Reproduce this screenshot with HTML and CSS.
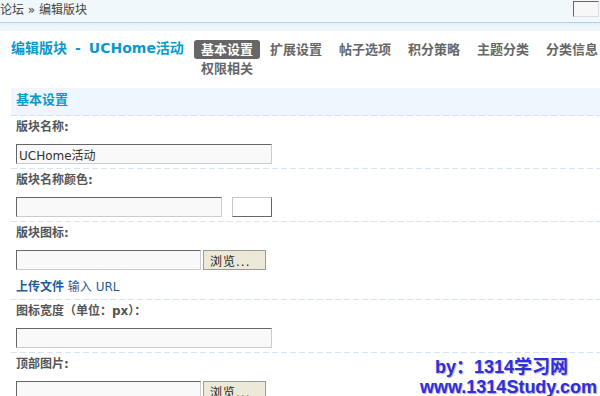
FILE: index.html
```html
<!DOCTYPE html>
<html><head>
<meta charset='utf-8' />
<title>编辑版块</title>
<link rel="stylesheet" href="styles.css">
</head><body>

<div class='topbar'>
	<span class='crumb'>论坛 &raquo; 编辑版块</span>
	<input class='topsearch' type='text' />
</div>
<div class='shade'></div>

<div class='head'>
	<h1 class='title'>编辑版块<span class='sep'>-</span>UCHome活动</h1>
	<ul class='tabs'>
		<li class='current'><a href='#'>基本设置</a></li>
		<li><a href='#'>扩展设置</a></li>
		<li><a href='#'>帖子选项</a></li>
		<li><a href='#'>积分策略</a></li>
		<li><a href='#'>主题分类</a></li>
		<li><a href='#'>分类信息</a></li>
		<li><a href='#'>权限相关</a></li>
	</ul>
</div>

<div class='section'>
	<h3 class='sect_title'>基本设置</h3>

	<div class='row'>
		<label class='lbl'>版块名称:</label>
		<div class='field'><input class='txt w256' type='text' value='UCHome活动' /></div>
	</div>

	<div class='row'>
		<label class='lbl'>版块名称颜色:</label>
		<div class='field'>
			<input class='txt w206' type='text' />
			<span class='swatch'></span>
		</div>
	</div>

	<div class='row'>
		<label class='lbl'>版块图标:</label>
		<div class='field'>
			<input class='txt w185' type='text' />
			<button class='browse' type='button'>浏览...</button>
		</div>
		<div class='switch'><a class='on' href='#'>上传文件</a> <a href='#'>输入 URL</a></div>
	</div>

	<div class='row'>
		<label class='lbl'>图标宽度（单位：px）：</label>
		<div class='field'><input class='txt w256' type='text' /></div>
	</div>

	<div class='row'>
		<label class='lbl'>顶部图片:</label>
		<div class='field'>
			<input class='txt w185' type='text' />
			<button class='browse' type='button'>浏览...</button>
		</div>
	</div>
</div>

<!-- site watermark laid over the capture -->
<div class='watermark'>
	<div class='wm1'>by：1314学习网</div>
	<div class='wm2'>www.1314Study.com</div>
</div>

</body></html>
```

FILE: styles.css
```css
:root {
	--title-color  : #0a99cb;
	--label-color  : #555555;
	--link-color   : #1d5d9b;
	--dash-color   : #d4e5f2;
	--ui-font      : "DejaVu Sans", "Noto Sans CJK SC", sans-serif;
}
html, body {
	margin           : 0;
	padding          : 0;
	overflow         : hidden;
	background-color : #ffffff;
	font-family      : var(--ui-font);
	font-size        : 12px;
}
.topbar {
	display          : flex;
	justify-content  : space-between;
	align-items      : flex-start;
	height           : 22px;
	background-color : #f0f8fc;
	border-bottom    : 1px solid #b7d2df;
}
.crumb {
	line-height : 20px;
	color       : #444444;
}
.topsearch {
	box-sizing       : border-box;
	width            : 26px;
	height           : 16px;
	margin           : 1px 1px 0 0;
	padding          : 0;
	background-color : #f7f7f7;
	border-style     : solid;
	border-width     : 1px;
	border-color     : #666666 #dddddd #dddddd #666666;
}
.shade {
	height     : 8px;
	background : linear-gradient(#e3f0f9, #f3f9fd);
}
.head {
	display     : flex;
	align-items : flex-start;
	padding-top : 9px;
}
.title {
	flex        : none;
	margin      : 0;
	padding     : 0 0 0 11px;
	box-sizing  : border-box;
	width       : 194px;
	line-height : 17px;
	font-size   : 14px;
	font-weight : bold;
	color       : var(--title-color);
	white-space : nowrap;
}
.title .sep {
	padding : 0 8px;
}
.tabs {
	flex       : none;
	display    : flex;
	flex-wrap  : wrap;
	width      : 424px;
	margin     : 0;
	padding    : 0;
	list-style : none;
}
.tabs li {
	margin-right : 3px;
}
.tabs a {
	display         : block;
	padding         : 0 7px;
	line-height     : 19px;
	font-size       : 13px;
	font-weight     : bold;
	color           : #666666;
	text-decoration : none;
	border-radius   : 3px;
	white-space     : nowrap;
}
.tabs .current a {
	background-color : #666666;
	color            : #ffffff;
}
.section {
	margin-top  : 10px;
	margin-left : 11px;
}
.sect_title, .row {
	background : linear-gradient(to right, var(--dash-color) 6px, transparent 6px) left bottom / 9px 1px repeat-x;
}
.sect_title {
	margin           : 0;
	padding          : 0 0 1px 5px;
	height           : 27px;
	line-height      : 24px;
	font-size        : 13px;
	font-weight      : bold;
	color            : var(--title-color);
	background-color : #eff6fd;
}
.row {
	padding : 2px 0 5px 5px;
}
.lbl {
	display     : block;
	line-height : 18px;
	font-weight : bold;
	color       : var(--label-color);
}
.field {
	display     : flex;
	align-items : flex-start;
	margin-top  : 8px;
}
.txt {
	box-sizing       : border-box;
	height           : 20px;
	margin           : 0;
	padding          : 0 2px;
	font-family      : var(--ui-font);
	font-size        : 12px;
	color            : #333333;
	background-color : #f9f9f9;
	border-style     : solid;
	border-width     : 1px;
	border-color     : #666666 #cccccc #cccccc #666666;
	outline          : none;
}
.w256 { width : 256px; }
.w206 { width : 206px; }
.w185 { width : 185px; }
.swatch {
	box-sizing       : border-box;
	width            : 40px;
	height           : 20px;
	margin-left      : 10px;
	background-color : #ffffff;
	border-style     : solid;
	border-width     : 1px;
	border-color     : #c8c8c8 #666666 #666666 #c8c8c8;
}
.browse {
	box-sizing       : border-box;
	width            : 63px;
	height           : 20px;
	margin-left      : 2px;
	padding          : 0 0 0 6px;
	text-align       : left;
	font-family      : var(--ui-font);
	font-size        : 12px;
	letter-spacing   : 1px;
	color            : #222222;
	background-color : #ece9d8;
	border           : 1px solid #9a9a9a;
	border-radius    : 0;
}
.switch {
	margin-top  : 9px;
	line-height : 16px;
}
.switch a {
	color           : var(--link-color);
	text-decoration : none;
}
.switch a.on {
	font-weight : bold;
}
.watermark {
	position    : absolute;
	left        : 420px;
	top         : 357px;
	font-family : "Liberation Sans", "Noto Sans CJK SC", sans-serif;
	font-size   : 18px;
	font-weight : bold;
	line-height : 20px;
	color       : #2e2ede;
	text-shadow : 1px 1px 1px #a8a8b8;
	white-space : nowrap;
}
.wm1 {
	padding-left : 15px;
}
```
